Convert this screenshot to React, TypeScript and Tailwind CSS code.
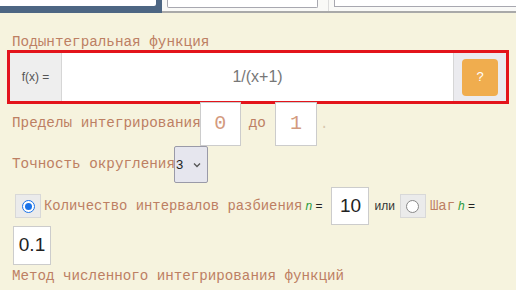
import React from "react";

const mono = { fontFamily: '"Liberation Mono", "Courier New", monospace' } as const;
const sans = { fontFamily: '"Liberation Sans", Arial, sans-serif' } as const;

function Radio({ checked }: { checked: boolean }) {
  return (
    <span className="flex h-[24px] w-[26px] items-center justify-center border border-[#d8d8d8] bg-[#ebebeb]">
      <span
        className={
          "flex h-[13px] w-[13px] items-center justify-center rounded-full border " +
          (checked ? "border-[#1a73e8] bg-white" : "border-[#888] bg-white")
        }
      >
        {checked && <span className="h-[7px] w-[7px] rounded-full bg-[#1a73e8]" />}
      </span>
    </span>
  );
}

export default function App() {
  return (
    <div className="h-[290px] w-[516px] overflow-hidden bg-[#f6f3de]">
      {/* tabs */}
      <div className="flex h-[13px] items-start border-b-2 border-[#a9a9a9] bg-[#f9f9f7]">
        <div className="h-[13px] w-[162px] bg-[#4d6683] pr-[6px] pb-[7px]">
          <div className="h-[6px] w-full rounded-br-[2px] bg-white" />
        </div>
        <div className="ml-[5px] h-[8px] w-[151px] rounded-b-[2px] border border-t-0 border-[#a8a8b0] bg-white" />
        <div className="ml-[6px] h-[11px] w-[5px] border-r border-[#dcdcdc]" />
        <div className="ml-[5px] h-[7px] flex-1 border border-t-0 border-r-0 border-[#a8a8b0] bg-white" />
      </div>

      <div className="px-[7px]">
        <div className="mt-[21px] pl-[5px] text-[14.3px] leading-[16px] text-[#bd7f63]" style={mono}>
          Подынтегральная функция
        </div>

        {/* function input */}
        <div className="flex h-[54px] w-[502px] border-[3px] border-[#e3141b] bg-white">
          <div
            className="flex w-[52px] items-center justify-center border-r border-[#d6d6d6] bg-[#eeeeee] text-[12px] text-[#555]"
            style={sans}
          >
            f(x) =
          </div>
          <div className="flex flex-1 items-center justify-center text-[16px] text-[#777]" style={sans}>
            1/(x+1)
          </div>
          <div className="flex w-[53px] items-center justify-center border-l border-[#d6d6d6] bg-[#ebebef]">
            <div
              className="flex h-[37px] w-[36px] items-center justify-center rounded-[4px] bg-[#f0ad4e] text-[13px] text-white"
              style={sans}
            >
              ?
            </div>
          </div>
        </div>

        {/* limits */}
        <div className="mt-[-2px] flex items-center pl-[5px]" style={mono}>
          <span className="text-[14.3px] text-[#bd7f63]">Пределы интегрирования</span>
          <span className="ml-[-1px] flex h-[44px] w-[41px] items-center justify-center border border-[#ccc] bg-white text-[20px] text-[#d39a7e]">
            0
          </span>
          <span className="ml-[8px] text-[14.3px] text-[#bd7f63]">до</span>
          <span className="ml-[9px] flex h-[44px] w-[42px] items-center justify-center border border-[#ccc] bg-white text-[20px] text-[#d39a7e]">
            1
          </span>
          <span className="ml-[3px] text-[14px] text-[#d8c8b0]">.</span>
        </div>

        {/* precision */}
        <div className="flex items-center pl-[5px]" style={mono}>
          <span className="text-[14.3px] text-[#bd7f63]">Точность округления</span>
          <span
            className="ml-[-1px] flex h-[37px] w-[34px] items-center justify-between rounded-[2px] border border-[#9a9aa8] bg-[#e6e6ee] pl-[1px] pr-[6px] text-[13px] text-[#222]"
            style={sans}
          >
            3
            <svg width="8" height="6" viewBox="0 0 8 6">
              <path d="M1 1.5 L4 4.5 L7 1.5" stroke="#555" strokeWidth="1.3" fill="none" />
            </svg>
          </span>
        </div>

        {/* intervals */}
        <div className="mt-[4px] flex flex-wrap items-center pl-[8px]">
          <Radio checked />
          <span className="ml-[3px] text-[13.9px] text-[#bd7f63]" style={mono}>
            Количество интервалов разбиения
          </span>
          <span className="ml-[3px] text-[12px] text-[#222]" style={sans}>
            <i className="text-[#2b9a3c]">n</i> =
          </span>
          <span
            className="ml-[9px] flex h-[38px] w-[38px] items-center justify-center border border-[#ccc] bg-white text-[19px] text-[#222]"
            style={sans}
          >
            10
          </span>
          <span className="ml-[5px] text-[12px] text-[#333]" style={sans}>
            или
          </span>
          <span className="ml-[5px]">
            <Radio checked={false} />
          </span>
          <span className="ml-[4px] text-[14px] text-[#bd7f63]" style={mono}>
            Шаг
          </span>
          <span className="ml-[3px] text-[12px] text-[#222]" style={sans}>
            <i className="text-[#2b9a3c]">h</i> =
          </span>
        </div>
        <div className="mt-[1px] pl-[6px]">
          <span
            className="flex h-[39px] w-[38px] items-center justify-center border border-[#ccc] bg-white text-[19px] text-[#222]"
            style={sans}
          >
            0.1
          </span>
        </div>
        <div className="mt-[3px] pl-[5px] text-[14.2px] leading-[16px] text-[#bd7f63]" style={mono}>
          Метод численного интегрирования функций
        </div>
      </div>
    </div>
  );
}
